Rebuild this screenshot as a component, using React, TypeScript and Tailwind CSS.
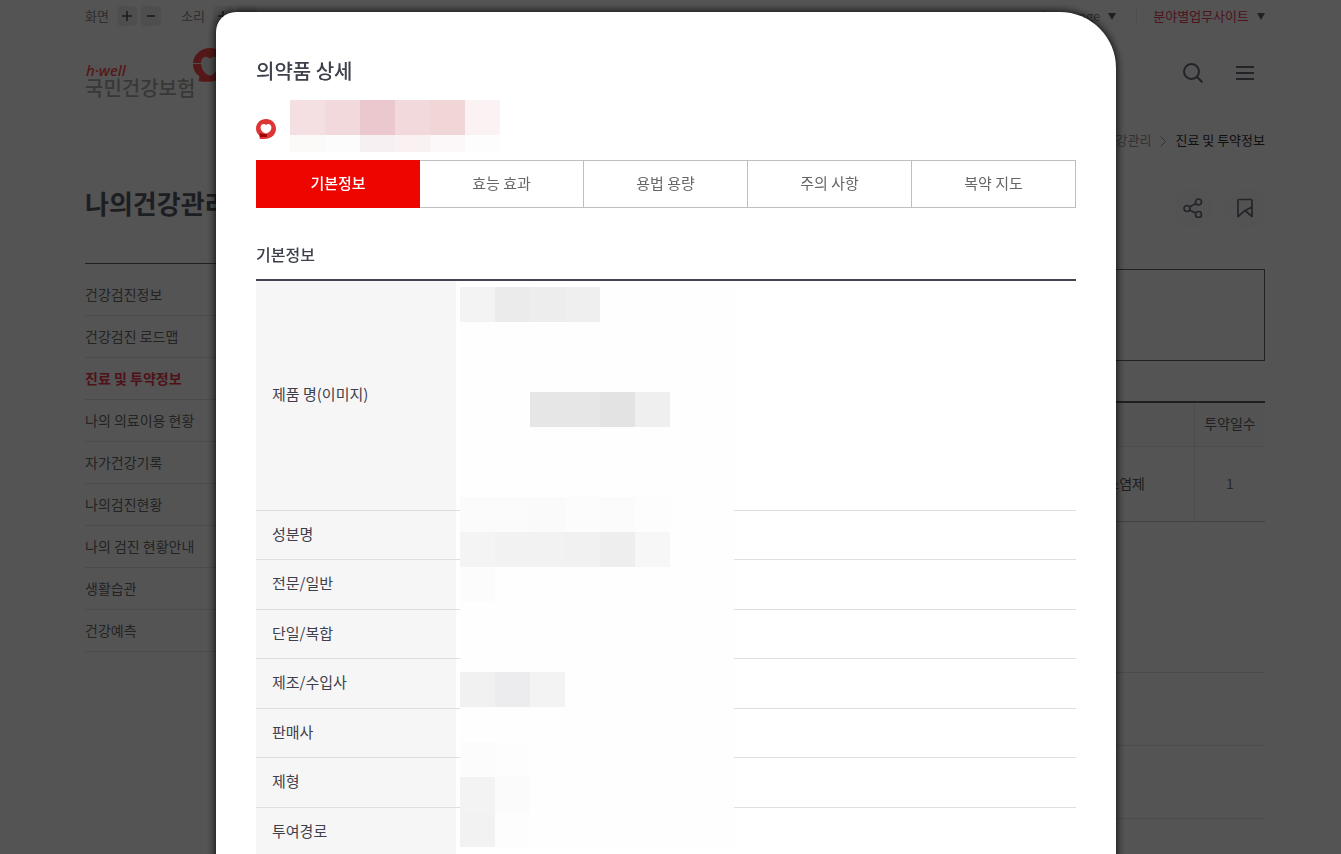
import { useState } from "react";

const sideMenu = [
  "건강검진정보",
  "건강검진 로드맵",
  "진료 및 투약정보",
  "나의 의료이용 현황",
  "자가건강기록",
  "나의검진현황",
  "나의 검진 현황안내",
  "생활습관",
  "건강예측",
];

const tabs = ["기본정보", "효능 효과", "용법 용량", "주의 사항", "복약 지도"];

const rows = ["성분명", "전문/일반", "단일/복합", "제조/수입사", "판매사", "제형", "투여경로"];

type Tile = [column: number, row: number, fill: string];

const nameTiles: Tile[] = [
  [0, 0, "#f4e0e2"], [1, 0, "#f1d9dc"], [2, 0, "#ebc8ce"], [3, 0, "#f2d9dc"], [4, 0, "#f1d6d8"], [5, 0, "#fbf2f3"],
  [0, 1, "#fbfaf9"], [1, 1, "#fdfcfd"], [2, 1, "#f6f0f3"], [3, 1, "#f9f1f2"], [4, 1, "#fcf7f9"], [5, 1, "#fdfdfd"],
];

const valueTiles: Tile[] = [
  [0, 0, "#f3f3f3"], [1, 0, "#ebebeb"], [2, 0, "#ededed"], [3, 0, "#efefef"],
  [2, 3, "#e6e6e6"], [3, 3, "#e6e6e6"], [4, 3, "#e3e3e3"], [5, 3, "#efefef"],
  [0, 6, "#fbfbfb"], [1, 6, "#fbfbfb"], [2, 6, "#fafafa"], [3, 6, "#fcfcfc"], [4, 6, "#fbfbfb"], [5, 6, "#fdfdfd"],
  [0, 7, "#f4f4f4"], [1, 7, "#f2f2f2"], [2, 7, "#f2f2f2"], [3, 7, "#f1f1f1"], [4, 7, "#eeeeee"], [5, 7, "#f7f7f7"],
  [0, 8, "#fcfcfc"],
  [0, 11, "#f1f1f1"], [1, 11, "#ececef"], [2, 11, "#f3f3f3"],
  [0, 13, "#fcfcfc"], [1, 13, "#fdfdfd"],
  [0, 14, "#f3f3f3"], [1, 14, "#fbfbfb"],
  [0, 15, "#f2f2f2"], [1, 15, "#fdfdfd"],
];

function Mosaic({ tiles, width, height, className }: { tiles: Tile[]; width: number; height: number; className: string }) {
  return (
    <svg width={width} height={height} className={className} shapeRendering="crispEdges" aria-hidden="true">
      <rect width={width} height={height} fill="#fefefe" />
      {tiles.map(([c, r, fill]) => (
        <rect key={`${c}-${r}`} x={c * 35} y={r * 35} width="35" height="35" fill={fill} />
      ))}
    </svg>
  );
}

function HeartMark({ className }: { className: string }) {
  return (
    <svg viewBox="0 0 20 20" className={className} aria-hidden="true">
      <path d="M10 0C4.300 0 0 4.200 0 9.600c0 3 1.400 5.600 3.700 7.300V20c2 0 4 .2 6.300-.2 5.600-.3 10-4.600 10-10C20 4.200 15.600 0 10 0Z" fill="#dc3535" />
      <path d="M3.700 14.300c2 .8 4.700 1 7.300.4v3.300H3.700Z" fill="#a30000" />
      <path d="M10 6C8.600 4.300 4.600 4.700 4.600 8.600c0 3.500 2.800 5.400 5.400 5.900 2.600-.5 5.400-2.400 5.400-5.900C15.400 4.700 11.400 4.300 10 6Z" fill="#fff" />
    </svg>
  );
}

function LogoMark() {
  return (
    <svg viewBox="0 0 34 34" className="-ml-0.5 size-[34px]" aria-hidden="true">
      <path d="M17 0C7.500 0 0 7 0 16c0 5.500 2.600 9.500 6.500 12.300L5.500 33c4 .8 7.500 1 11.500.8C27 33.500 34 26 34 17 34 7.500 26.500 0 17 0Z" fill="#ff4a4a" />
      <path d="M17 11C14 7 8 8.500 8 15c0 6.500 4 11.500 9 12.500 5-1 9-6 9-12.500C26 8.500 20 7 17 11Z" fill="#e8e8e8" />
      <path d="M0 15.500h8" stroke="#e8e8e8" strokeWidth="1" />
    </svg>
  );
}

function SizeButton({ label, plus }: { label: string; plus?: boolean }) {
  return (
    <button type="button" aria-label={label} className="flex size-5 items-center justify-center rounded bg-[#ebebeb]">
      <svg viewBox="0 0 10 10" className="size-[10px]" stroke="#555" strokeWidth="1.6">
        <path d={plus ? "M0 5h10M5 0v10" : "M1 5h8"} />
      </svg>
    </button>
  );
}

function Caret() {
  return (
    <svg viewBox="0 0 8 7" className="h-[7px] w-2" fill="#666" aria-hidden="true">
      <path d="M0 0h8L4 7Z" />
    </svg>
  );
}

function Header() {
  return (
    <header>
      <div className="flex h-8 items-center justify-between text-[13px] text-[#8c8c8c]">
        <div className="flex items-center gap-1">
          <span className="mr-1">화면</span>
          <SizeButton label="화면 확대" plus />
          <SizeButton label="화면 축소" />
          <span className="mr-1 ml-4">소리</span>
          <SizeButton label="소리 크게" plus />
          <SizeButton label="소리 작게" />
        </div>
        <div className="flex items-center">
          <button type="button" className="flex items-center gap-2">
            Language <Caret />
          </button>
          <span className="mr-4 ml-5 h-4 w-px bg-[#ececec]" />
          <button type="button" className="flex items-center gap-2 text-[#e8405c]">
            분야별업무사이트 <Caret />
          </button>
        </div>
      </div>
      <div className="flex h-[82px] items-center justify-between">
        <a href="#home" className="flex items-start" aria-label="국민건강보험">
          <span className="flex flex-col pt-[14px]">
            <span className="pl-px font-['Noto_Sans'] text-[15px] leading-4 font-medium text-[#ff4a4a] italic">h·well</span>
            <span className="text-[20px] leading-5 font-medium text-[#aaa]">국민건강보험</span>
          </span>
          <LogoMark />
        </a>
        <div className="flex items-center gap-8 pr-[10px] text-[#666a76]">
          <button type="button" aria-label="검색">
            <svg viewBox="0 0 20 20" className="size-5" fill="none" stroke="currentColor" strokeWidth="2">
              <circle cx="8.500" cy="8.500" r="7.500" />
              <path d="m14 14 5.500 5.500" />
            </svg>
          </button>
          <button type="button" aria-label="전체메뉴">
            <svg viewBox="0 0 20 20" className="size-5" stroke="currentColor" strokeWidth="2">
              <path d="M1 4h18M1 10h18M1 16h18" />
            </svg>
          </button>
        </div>
      </div>
      <nav aria-label="현재 위치" className="flex h-[54px] items-center justify-end gap-2 pb-0.5 text-[13px] text-[#999]">
        <a href="#health">나의건강관리</a>
        <svg viewBox="0 0 8 12" className="mt-0.5 h-3 w-2" fill="none" stroke="currentColor" aria-hidden="true">
          <path d="m1.500 1.500 5 5-5 5" />
        </svg>
        <a href="#care" className="text-[#333]">진료 및 투약정보</a>
      </nav>
    </header>
  );
}

function SideMenu() {
  return (
    <aside className="w-[210px] shrink-0 pt-[14px]">
      <h1 className="border-b border-[#666] pb-[39px] text-[26px] leading-[42px] font-bold whitespace-nowrap text-[#5a5d68]">나의건강관리</h1>
      <ul className="pt-[10px] text-[14px] text-[#6c6c6c]">
        {sideMenu.map((item, i) => (
          <li key={item} className="border-b border-[#e2e2e2]">
            <a href={`#menu-${i}`} className={i === 2 ? "block leading-[41px] font-bold text-[#ec3a4c]" : "block leading-[41px]"}>
              {item}
            </a>
          </li>
        ))}
      </ul>
    </aside>
  );
}

function PageContent() {
  return (
    <main className="min-w-0 flex-1">
      <div className="flex justify-end gap-3 pt-5 text-[#6c707c]">
        <button type="button" aria-label="공유" className="flex size-10 items-center justify-center rounded-full bg-[#fafafa]">
          <svg viewBox="0 0 20 20" className="size-5" fill="none" stroke="currentColor" strokeWidth="1.700">
            <circle cx="4" cy="10.500" r="3" />
            <circle cx="15.500" cy="4" r="3" />
            <circle cx="15.500" cy="16.500" r="3" />
            <path d="m6.600 9 6.300-3.500M6.600 12l6.300 3.200" />
          </svg>
        </button>
        <button type="button" aria-label="북마크" className="flex size-10 items-center justify-center rounded-full bg-[#fafafa]">
          <svg viewBox="0 0 20 20" className="size-5" fill="none" stroke="currentColor" strokeWidth="1.700" strokeLinejoin="round">
            <path d="M3 18.500V2.500Q3 1.500 4 1.500h12q1 0 1 1v16l-7-6Zm7-6 7-3.500" />
          </svg>
        </button>
      </div>
      <div className="mt-[41px] h-[92px] border border-[#666]" />
      <table className="mt-10 w-full border-separate border-spacing-0 border-t-2 border-[#5c606c] text-[14px] text-[#777]">
        <thead>
          <tr className="h-11 bg-[#fafafa]">
            <th className="border-b border-[#e6e6e6] pb-0.5 font-normal" />
            <th className="w-[71px] border-b border-l border-[#e6e6e6] pb-0.5 font-normal text-[#666]">투약일수</th>
          </tr>
        </thead>
        <tbody>
          <tr className="h-[75px]">
            <td className="border-b border-[#c4c4c4] pr-[49px] pb-0.5 text-right text-[#5a5a5a]">해열진통소염제</td>
            <td className="border-b border-l border-b-[#c4c4c4] border-l-[#e6e6e6] pb-0.5 text-center">1</td>
          </tr>
        </tbody>
      </table>
      <div className="mt-[78px] border-b border-[#e2e2e2] pt-[72px]" />
      <div className="border-b border-[#e2e2e2] pt-[72px]" />
      <div className="border-b border-[#e2e2e2] pt-[72px]" />
    </main>
  );
}

function MedicineDialog() {
  const [active, setActive] = useState(0);
  return (
    <section
      role="dialog"
      aria-modal="true"
      aria-labelledby="dialog-title"
      className="mt-3 min-h-screen w-full max-w-[900px] shrink-0 self-start rounded-tl-[20px] rounded-tr-[56px] bg-white px-10 pt-[43px] text-[#3e404c] shadow-[0_0_10px_#000]"
    >
      <h2 id="dialog-title" className="text-[20px] leading-8 font-medium">의약품 상세</h2>
      <div className="mt-[13px] mb-2 flex h-[52px] items-start gap-[14px]">
        <HeartMark className="mt-[19px] size-5" />
        <Mosaic tiles={nameTiles} width={210} height={52} className="shrink-0" />
      </div>
      <div role="tablist" className="grid grid-cols-5 text-[15px]">
        {tabs.map((tab, i) => (
          <button
            key={tab}
            type="button"
            role="tab"
            aria-selected={i === active}
            onClick={() => setActive(i)}
            className={
              i === active
                ? "h-12 border border-[#ee0500] bg-[#ee0500] pb-0.5 font-medium text-white"
                : "h-12 border border-l-0 border-[#bfbfbf] pb-0.5 text-[#666]"
            }
          >
            {tab}
          </button>
        ))}
      </div>
      <h3 className="mt-[34px] mb-3 text-[16px] leading-[25px] font-medium">기본정보</h3>
      <div className="relative">
        <table className="w-full border-separate border-spacing-0 border-t-2 border-[#424551] text-left text-[15px]">
          <tbody>
            <tr className="h-[230px]">
              <th className="w-[200px] border-b border-[#dfdfdf] bg-[#f6f6f6] pb-0.5 pl-4 font-normal">제품 명(이미지)</th>
              <td className="border-b border-[#dfdfdf]" />
            </tr>
            {rows.map((row) => (
              <tr key={row} className="odd:h-[50px] even:h-[49px]">
                <th className="border-b border-[#dfdfdf] bg-[#f6f6f6] pb-0.5 pl-4 font-normal">{row}</th>
                <td className="border-b border-[#dfdfdf]" />
              </tr>
            ))}
          </tbody>
        </table>
        <Mosaic tiles={valueTiles} width={274} height={560} className="absolute top-2 left-[204px]" />
      </div>
    </section>
  );
}

export default function App() {
  return (
    <div className="h-screen overflow-hidden bg-white font-['Noto_Sans_CJK_KR',sans-serif]">
      <div className="pr-[76px] pl-[85px]">
        <Header />
        <div className="flex gap-10">
          <SideMenu />
          <PageContent />
        </div>
      </div>
      <div className="fixed inset-0 flex justify-center overflow-hidden bg-black/67 pr-[9px]">
        <MedicineDialog />
      </div>
    </div>
  );
}
